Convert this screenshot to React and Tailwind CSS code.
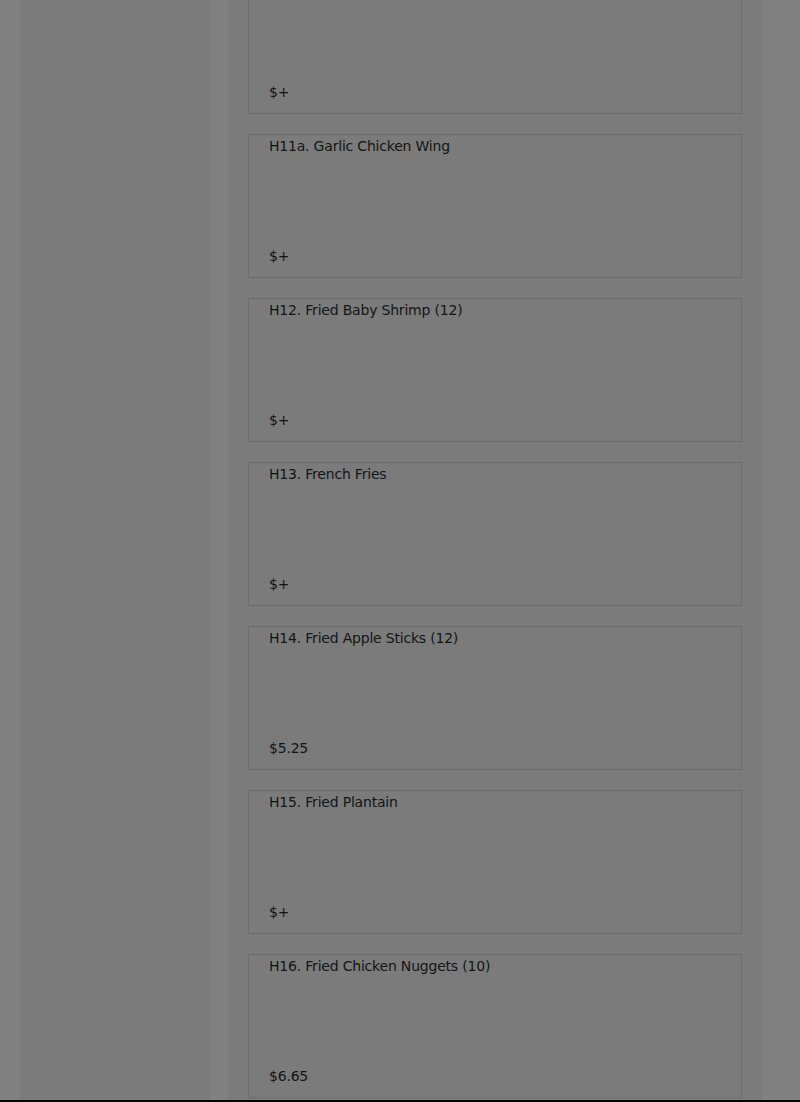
import React from "react";

const items = [
	{ name: "H11. Chicken Wing", price: "$+" },
	{ name: "H11a. Garlic Chicken Wing", price: "$+" },
	{ name: "H12. Fried Baby Shrimp (12)", price: "$+" },
	{ name: "H13. French Fries", price: "$+" },
	{ name: "H14. Fried Apple Sticks (12)", price: "$5.25" },
	{ name: "H15. Fried Plantain", price: "$+" },
	{ name: "H16. Fried Chicken Nuggets (10)", price: "$6.65" },
];

const MenuCard = ({ item }) => (
	<div className="flex h-[144px] shrink-0 flex-col justify-between border border-[#6c6c6c] px-5 pt-[1px] pb-[11px]">
		<p className="leading-5">{item.name}</p>
		<p className="leading-5">{item.price}</p>
	</div>
);

const App = () => {
	return (
		<div className="bg-[#808080] text-[14px] text-[#141414] [font-family:'DejaVu_Sans',sans-serif] tracking-[-0.2px]">
			<div className="flex h-[1100px] gap-[18px] overflow-hidden px-5">
				{/* sidebar */}
				<div className="w-[190px] shrink-0 bg-[#7b7b7b]"></div>

				{/* menu list */}
				<div className="w-[534px] shrink-0 bg-[#7b7b7b] px-5">
					<div className="-mt-[30px] flex flex-col gap-5">
						{items.map((item) => (
							<MenuCard key={item.name} item={item} />
						))}
					</div>
				</div>
			</div>
			<div className="h-[2px] bg-black"></div>
		</div>
	);
};

export default App;
